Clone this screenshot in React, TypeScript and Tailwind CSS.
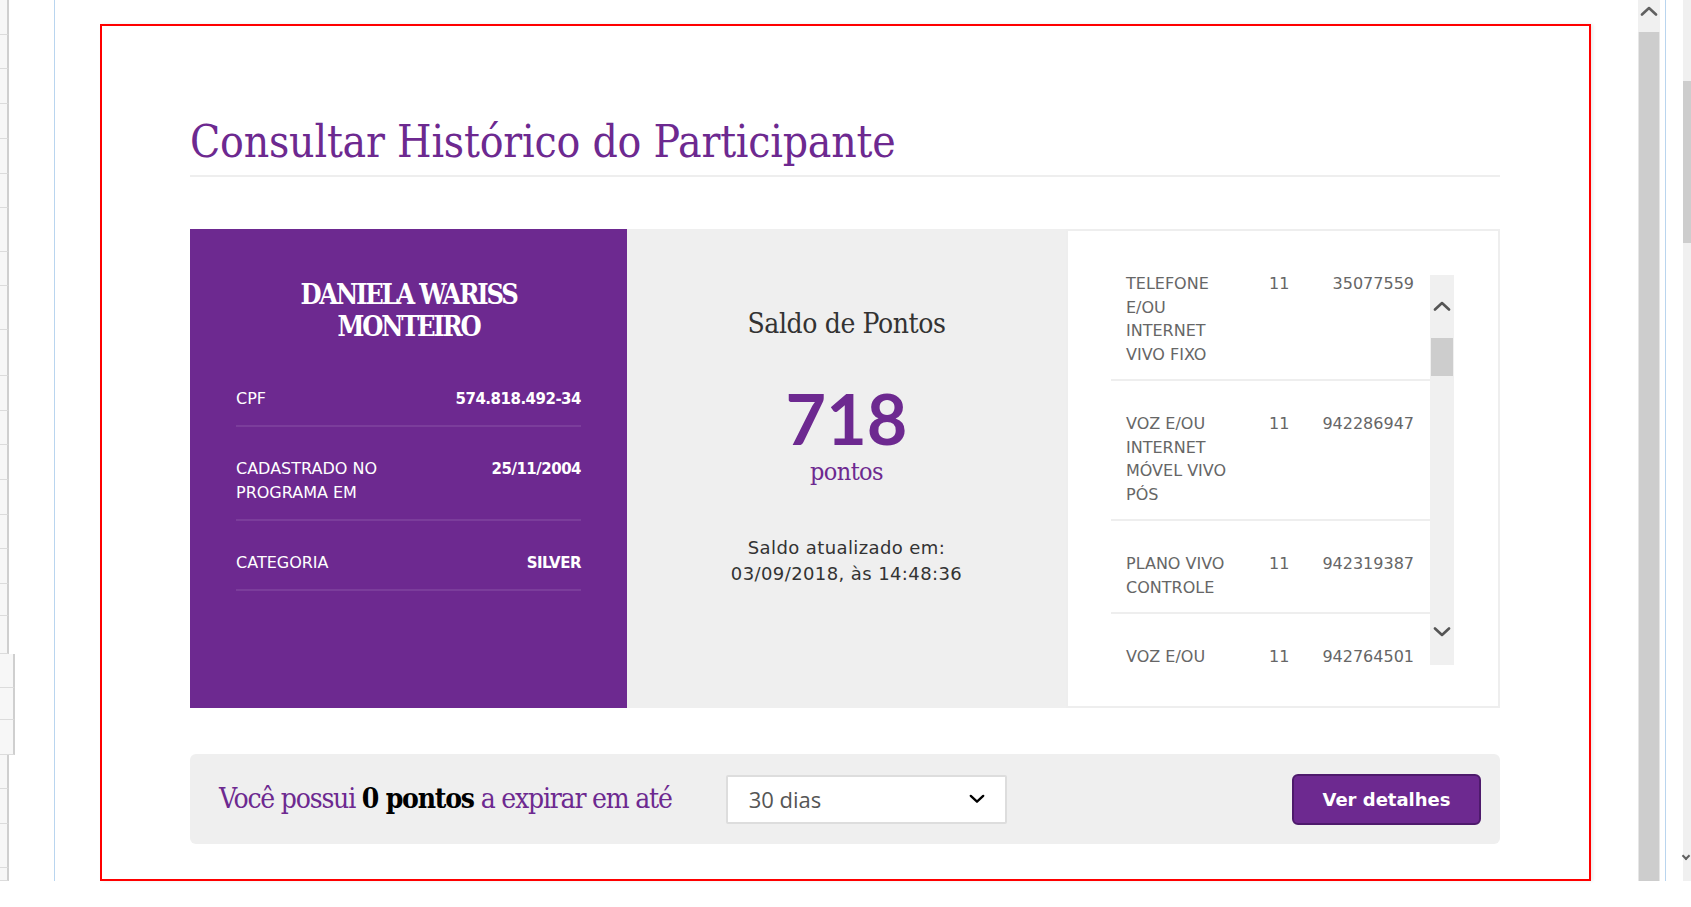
import React from "react";

const SLAB = "font-['DejaVu_Serif_Condensed','DejaVu_Serif',serif]";
const SANS = "font-['DejaVu_Sans','Verdana',sans-serif]";

// heights of the spreadsheet-like cells peeking in on the far left
const LEFT_CELLS = [35, 34, 35, 35, 35, 34, 44, 34, 44, 46, 35, 34, 35, 35, 34, 35, 32, 38, 34, 32, 35, 34, 35, 44, 13];

const LINES = [
  { name: ["TELEFONE", "E/OU", "INTERNET", "VIVO FIXO"], ddd: "11", num: "35077559" },
  { name: ["VOZ E/OU", "INTERNET", "MÓVEL VIVO", "PÓS"], ddd: "11", num: "942286947" },
  { name: ["PLANO VIVO", "CONTROLE"], ddd: "11", num: "942319387" },
  { name: ["VOZ E/OU", "INTERNET"], ddd: "11", num: "942764501" },
];

function Chevron({ up, className }: { up?: boolean; className?: string }) {
  return (
    <svg viewBox="0 0 18 10" className={className} fill="none">
      <polyline
        points={up ? "2,8.5 9,2 16,8.5" : "2,1.5 9,8 16,1.5"}
        stroke="currentColor"
        strokeWidth="2.6"
        strokeLinecap="round"
        strokeLinejoin="round"
      />
    </svg>
  );
}

function InfoRow({ label, value }: { label: React.ReactNode; value: string }) {
  return (
    <div className="flex items-start justify-between border-b-2 border-[#7b3d9b] pt-[30px] pb-[14px]">
      <div className="text-[16px] leading-[24px] text-white">{label}</div>
      <div className="text-[15px] font-bold leading-[24px] tracking-[-0.5px] text-white">{value}</div>
    </div>
  );
}

export default function App() {
  return (
    <div className={`relative h-[907px] w-[1691px] overflow-hidden bg-white ${SANS}`}>
      <div className="flex h-[881px]">
        {/* left spreadsheet strip */}
        <div className="flex w-[15px] flex-col">
          {LEFT_CELLS.map((h, i) => (
            <div
              key={i}
              style={{ height: h }}
              className={`border-b border-r-2 border-b-[#dcdcdc] border-r-[#cfcfcf] bg-[#f7f7f7] ${
                i >= 18 && i <= 20 ? "w-[15px]" : "w-[9px]"
              }`}
            />
          ))}
        </div>
        <div className="w-[39px]" />
        <div className="w-px bg-[#b9d5ef]" />

        {/* page */}
        <div className="flex-1 pt-[24px] pl-[45px] pr-[47px]">
          <div className="h-[857px] border-2 border-[#ff0000] pl-[88px] pr-[89px] shadow-[2px_0_3px_rgba(0,0,0,0.08)]">
            <h1 className={`${SLAB} pt-[90px] text-[44px] leading-[52px] tracking-[-0.2px] text-[#6d2990]`}>
              Consultar Histórico do Participante
            </h1>
            <div className="mt-[7px] h-[2px] bg-[#eeeeee]" />

            {/* cards */}
            <div className="mt-[52px] flex h-[479px]">
              <div className="w-[437px] bg-[#6d2990] px-[46px] pt-[50px]">
                <div className={`${SLAB} text-center text-[27px] font-bold leading-[32px] tracking-[-2.2px] text-white`}>
                  DANIELA WARISS
                  <br />
                  MONTEIRO
                </div>
                <div className="mt-[14px]">
                  <InfoRow label="CPF" value="574.818.492-34" />
                  <InfoRow
                    label={
                      <>
                        CADASTRADO NO
                        <br />
                        PROGRAMA EM
                      </>
                    }
                    value="25/11/2004"
                  />
                  <InfoRow label="CATEGORIA" value="SILVER" />
                </div>
              </div>

              <div className="flex w-[439px] flex-col items-center bg-[#efefef] pt-[79px]">
                <div className={`${SLAB} text-[28px] leading-[32px] tracking-[-0.4px] text-[#333333]`}>
                  Saldo de Pontos
                </div>
                <div className="mt-[46px] font-['Lato',sans-serif] text-[70px] font-bold leading-[64px] text-[#6d2990]">
                  718
                </div>
                <div className={`${SLAB} mt-[8px] text-[25px] leading-[28px] tracking-[-0.6px] text-[#6d2990]`}>
                  pontos
                </div>
                <div className="mt-[49px] text-center text-[18px] leading-[26px] tracking-[0.4px] text-[#333333]">
                  Saldo atualizado em:
                  <br />
                  03/09/2018, às 14:48:36
                </div>
              </div>

              <div className="flex flex-1 border-2 border-[#eeeeee] pt-[44px] pr-[44px] pl-[43px]">
                <div className="h-[390px] flex-1 overflow-hidden">
                  <div className="-mt-[34px]">
                    {LINES.map((l, i) => (
                      <div
                        key={i}
                        className="flex border-b-2 border-[#eeeeee] pt-[31px] pr-[16px] pb-[13px] pl-[15px] text-[16px] leading-[23.5px] text-[#666666]"
                      >
                        <div className="w-[128px]">
                          {l.name.map((n, j) => (
                            <div key={j}>{n}</div>
                          ))}
                        </div>
                        <div className="ml-[15px] w-[30px]">{l.ddd}</div>
                        <div className="flex-1 text-right">{l.num}</div>
                      </div>
                    ))}
                  </div>
                </div>
                <div className="flex h-[390px] w-[24px] flex-col items-center bg-[#f0f0f0]">
                  <Chevron up className="mt-[26px] h-[10px] w-[18px] text-[#555555]" />
                  <div className="mt-[27px] h-[38px] w-[22px] bg-[#cdcdcd]" />
                  <div className="flex-1" />
                  <Chevron className="mb-[28px] h-[10px] w-[18px] text-[#555555]" />
                </div>
              </div>
            </div>

            {/* expiring points bar */}
            <div className="mt-[46px] flex h-[90px] items-center rounded-md bg-[#efefef] pr-[19px] pl-[29px]">
              <div className={`${SLAB} text-[28px] tracking-[-1.2px] text-[#6d2990]`}>
                Você possui <span className="font-bold text-black">0 pontos</span> a expirar em até
              </div>
              <div className="ml-[54px] flex h-[49px] w-[281px] items-center justify-between rounded-[2px] border-2 border-[#dddddd] bg-white pr-[20px] pl-[21px]">
                <span className="font-['Open_Sans',sans-serif] text-[22px] text-[#555555]">30 dias</span>
                <Chevron className="h-[10px] w-[16px] text-black" />
              </div>
              <button className="ml-auto flex h-[51px] w-[189px] items-center justify-center rounded-md border-2 border-[#4e1a6c] bg-[#6d2990] text-[18px] font-bold text-white">
                Ver detalhes
              </button>
            </div>
          </div>
        </div>

        {/* outer scrollbar */}
        <div className="flex w-[22px] flex-col">
          <div className="flex h-[32px] items-start justify-center bg-[#f0f0f0] pt-[6px]">
            <Chevron up className="h-[10px] w-[18px] text-[#606060]" />
          </div>
          <div className="flex-1 border-x border-[#e6e6e6] bg-[#cdcdcd]" />
        </div>
        <div className="w-[5px]" />
        <div className="w-px bg-[#b9d5ef]" />
        <div className="w-[17px]" />
        <div className="flex w-[8px] flex-col bg-[#f0f0f0]">
          <div className="mt-[81px] h-[162px] bg-[#cdcdcd]" />
          <div className="flex-1" />
          <div className="mb-[22px] h-[6px] w-[6px] -rotate-45 border-b-2 border-l-2 border-[#606060]" />
        </div>
      </div>
    </div>
  );
}
